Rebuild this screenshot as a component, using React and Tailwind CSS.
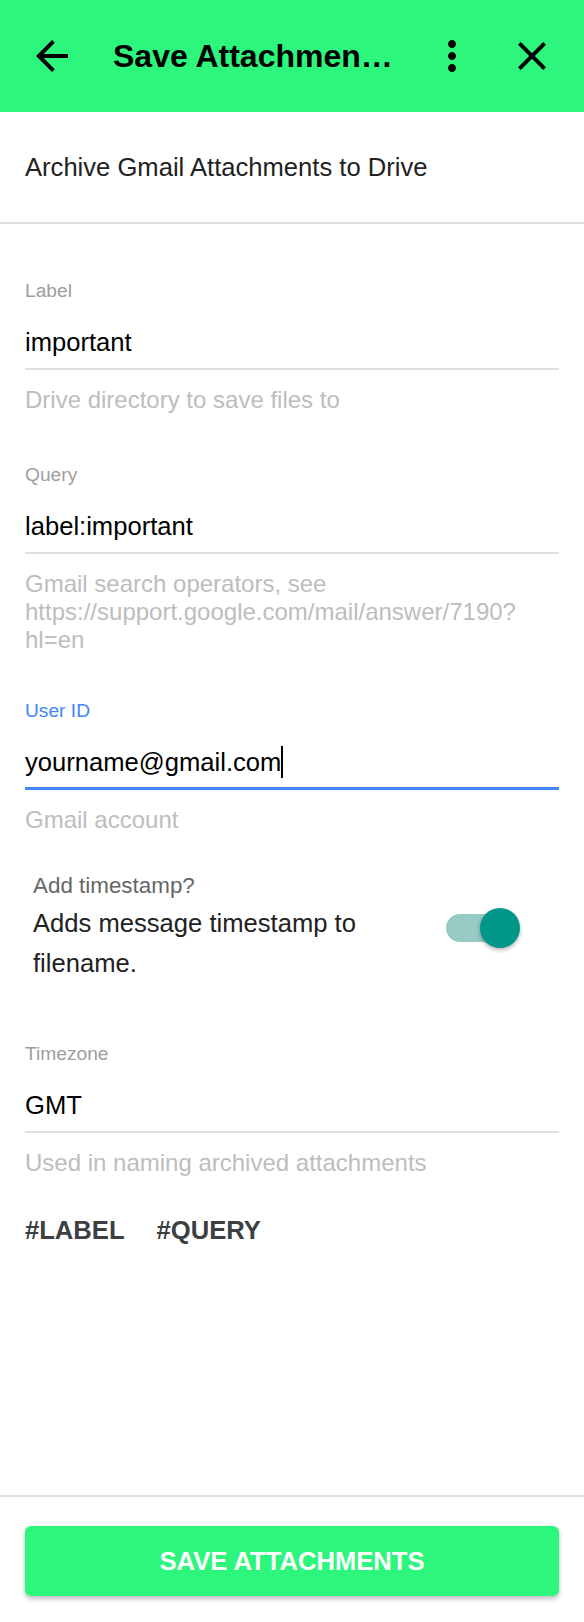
import React from "react";

function BackIcon() {
  return (
    <svg viewBox="0 0 24 24" className="w-12 h-12" fill="#000">
      <path d="M20 11H7.83l5.59-5.59L12 4l-8 8 8 8 1.41-1.41L7.83 13H20v-2z" />
    </svg>
  );
}

function MoreIcon() {
  return (
    <svg viewBox="0 0 24 24" className="w-12 h-12" fill="#000">
      <path d="M12 8c1.1 0 2-.9 2-2s-.9-2-2-2-2 .9-2 2 .9 2 2 2zm0 2c-1.1 0-2 .9-2 2s.9 2 2 2 2-.9 2-2-.9-2-2-2zm0 6c-1.1 0-2 .9-2 2s.9 2 2 2 2-.9 2-2-.9-2-2-2z" />
    </svg>
  );
}

function CloseIcon() {
  return (
    <svg viewBox="0 0 24 24" className="w-12 h-12" fill="#000">
      <path d="M19 6.41L17.59 5 12 10.59 6.41 5 5 6.41 10.59 12 5 17.59 6.41 19 12 13.41 17.59 19 19 17.59 13.41 12z" />
    </svg>
  );
}

function Field({ label, value, helper, focused, className = "" }) {
  return (
    <div className={className}>
      {/* Floating label */}
      <div
        className={`text-[19.2px] leading-[22px] ${
          focused ? "text-[#4285f4]" : "text-[#9e9e9e]"
        }`}
      >
        {label}
      </div>

      {/* Input */}
      <div
        className={
          focused
            ? "mt-[25px] pb-[10px] border-b-[3px] border-[#4285f4]"
            : "mt-[25px] pb-[11px] border-b-2 border-[#e0e0e0]"
        }
      >
        <div className="flex items-center h-[30px] text-[25.6px] text-black">
          <span>{value}</span>
          {focused && <span className="inline-block w-[2px] h-[32px] bg-black" />}
        </div>
      </div>

      {/* Helper text */}
      <div className="mt-[16px] text-[24px] leading-[28px] text-[#bdbdbd] break-all">
        {helper}
      </div>
    </div>
  );
}

export default function App() {
  return (
    <div className="h-screen flex flex-col bg-white font-['Liberation_Sans',Arial,sans-serif]">
      {/* Header */}
      <header className="h-[112px] shrink-0 bg-[#2cf67b] flex items-center px-[28px]">
        <button className="w-12 h-12 flex items-center justify-center">
          <BackIcon />
        </button>
        <h1 className="ml-[37px] mr-[30px] flex-1 min-w-0 truncate text-[32px] font-bold text-black">
          Save Attachments to Drive
        </h1>
        <div className="flex items-center gap-8">
          <button className="w-12 h-12 flex items-center justify-center">
            <MoreIcon />
          </button>
          <button className="w-12 h-12 flex items-center justify-center">
            <CloseIcon />
          </button>
        </div>
      </header>

      {/* Description */}
      <div className="h-[112px] shrink-0 flex items-center px-[25px] border-b-2 border-[#e0e0e0]">
        <p className="text-[25.6px] text-[#222]">Archive Gmail Attachments to Drive</p>
      </div>

      {/* Form */}
      <div className="flex-1 px-[25px] pt-[56px]">
        <Field label="Label" value="important" helper="Drive directory to save files to" />
        <Field
          className="mt-[50px]"
          label="Query"
          value="label:important"
          helper={
            <>
              Gmail search operators, see
              <br />
              https://support.google.com/mail/answer/7190?
              <br />
              hl=en
            </>
          }
        />
        <Field
          className="mt-[46px]"
          label="User ID"
          value="yourname@gmail.com"
          helper="Gmail account"
          focused
        />

        {/* Timestamp switch */}
        <div className="mt-[39px] pl-[8px] flex items-center">
          <div className="flex-1">
            <div className="text-[22.4px] leading-[26px] text-[#666]">Add timestamp?</div>
            <div className="mt-[4px] text-[25.6px] leading-[40px] text-[#212121]">
              Adds message timestamp to filename.
            </div>
          </div>
          <div className="relative w-[74px] h-[40px] mr-[39px] shrink-0">
            <div className="absolute left-0 top-[6px] w-[68px] h-[28px] rounded-full bg-[#97cbc4]" />
            <div className="absolute right-0 top-0 w-[40px] h-[40px] rounded-full bg-[#009688] shadow-[0_2px_4px_rgba(0,0,0,0.3)]" />
          </div>
        </div>

        <Field
          className="mt-[60px]"
          label="Timezone"
          value="GMT"
          helper="Used in naming archived attachments"
        />

        {/* Variables */}
        <div className="mt-[38px] flex gap-[32px] text-[25.6px] leading-[30px] font-bold text-[#3c4043]">
          <span>#LABEL</span>
          <span>#QUERY</span>
        </div>
      </div>

      {/* Footer */}
      <div className="shrink-0 border-t-2 border-[#e0e0e0] px-[25px] pt-[29px] pb-[26px]">
        <button className="w-full h-[70px] rounded-[6px] bg-[#2cf67b] shadow-[0_3px_5px_rgba(0,0,0,0.25)] text-white text-[25.6px] font-bold uppercase">
          Save Attachments
        </button>
      </div>
    </div>
  );
}
